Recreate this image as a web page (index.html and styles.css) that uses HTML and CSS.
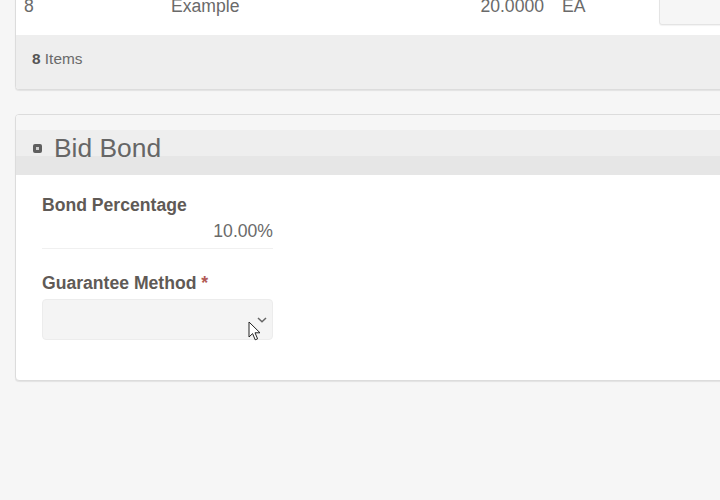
FILE: index.html
```html
<!DOCTYPE html>
<html>
<head>
<meta charset="utf-8">
<link rel="stylesheet" href="styles.css">
</head>
<body>
<div class="page">
  <section class="card items-card">
    <div class="item-row">
      <span class="c-num">8</span>
      <span class="c-desc">Example</span>
      <span class="c-qty">20.0000</span>
      <span class="c-uom">EA</span>
      <span class="c-input"><span class="input-box"></span></span>
    </div>
    <div class="items-footer"><b>8</b> Items</div>
  </section>

  <section class="card bond-card">
    <header class="bond-head">
      <svg class="collapse-icon" width="9" height="9" viewBox="0 0 9 9"><rect x="0" y="0" width="9" height="9" rx="2" fill="#5f5f5f"/><rect x="3" y="3" width="3" height="3" fill="#cfcfcf"/></svg>
      <h2 class="bond-title">Bid Bond</h2>
    </header>
    <div class="bond-body">
      <div class="field field-readonly">
        <div class="field-label">Bond Percentage</div>
        <div class="field-value">10.00%</div>
      </div>
      <div class="field field-select">
        <div class="field-label">Guarantee Method <span class="req">*</span></div>
        <div class="select-box">
          <svg class="chevron" width="10" height="6" viewBox="0 0 10 6"><path d="M1 1 L5 4.8 L9 1" fill="none" stroke="#666" stroke-width="1.5"/></svg>
          <svg class="cursor" width="14" height="21" viewBox="0 0 14 21"><path d="M1 1 L1 16 L4.6 12.6 L7.2 18.8 L9.6 17.8 L7 11.8 L12 11.8 Z" fill="#fff" stroke="#222" stroke-width="1" stroke-linejoin="round"/></svg>
        </div>
      </div>
    </div>
  </section>
</div>
</body>
</html>
```

FILE: styles.css
```css
html, body {
  margin: 0;
  padding: 0;
}
body {
  background: #f6f6f6;
  font-family: "Liberation Sans", Arial, sans-serif;
  color: #666;
  overflow: hidden;
  width: 720px;
  height: 500px;
}
.page {
  padding-left: 15px;
}
.card {
  background: #fff;
  border: 1px solid #dcdcdc;
  border-radius: 4px;
  margin-right: -20px;
  box-shadow: 0 1px 1px rgba(0,0,0,0.08);
  overflow: hidden;
}
.items-card {
  margin-top: -22px;
}
.item-row {
  display: grid;
  grid-template-columns: 147px 273px 100px 115px 1fr;
  align-items: center;
  height: 56px;
  padding-left: 8px;
  font-size: 17.6px;
  color: #6a6a6a;
}
.c-num, .c-desc, .c-qty, .c-uom {
  margin-top: -2px;
}
.c-qty {
  text-align: right;
}
.c-uom {
  padding-left: 18px;
}
.c-input {
  align-self: stretch;
  padding: 10px 0 10px 0;
  display: flex;
}
.input-box {
  flex: 1;
  background: #f6f6f6;
  border: 1px solid #e4e4e4;
  border-radius: 3px;
  box-shadow: 0 1px 1px rgba(0,0,0,0.05);
}
.items-footer {
  background: #eeeeee;
  height: 20px;
  padding: 14px 0 20px 16px;
  line-height: 20px;
  font-size: 15.4px;
  color: #6a6a6a;
}
.items-footer b {
  color: #555;
}
.bond-card {
  margin-top: 24px;
}
.bond-head {
  display: flex;
  align-items: center;
  height: 30px;
  padding: 18px 0 12px 17px;
  background: linear-gradient(to bottom, #f6f6f6 0, #f6f6f6 15px, #eeeeee 15px, #eeeeee 41px, #e6e6e6 41px, #e6e6e6 60px);
}
.collapse-icon {
  flex: none;
  margin-right: 12px;
  margin-top: 1px;
}
.bond-title {
  margin: 0;
  font-weight: normal;
  font-size: 26.4px;
  line-height: 30px;
  color: #666;
}
.bond-body {
  padding: 19px 0 40px 26px;
}
.field {
  width: 231px;
}
.field-label {
  font-weight: bold;
  font-size: 17.6px;
  line-height: 22px;
  color: #5f5a56;
}
.field-value {
  margin-top: 4px;
  text-align: right;
  font-size: 17.6px;
  line-height: 22px;
  color: #6a6a6a;
  padding-bottom: 6px;
  border-bottom: 1px solid #f0f0f0;
}
.field-select {
  margin-top: 23px;
}
.req {
  color: #b25a55;
}
.select-box {
  position: relative;
  margin-top: 5px;
  height: 39px;
  background: #f4f4f4;
  border: 1px solid #ececec;
  border-radius: 4px;
}
.chevron {
  position: absolute;
  right: 5px;
  top: 17px;
}
.cursor {
  position: absolute;
  left: 205px;
  top: 21px;
}
```
